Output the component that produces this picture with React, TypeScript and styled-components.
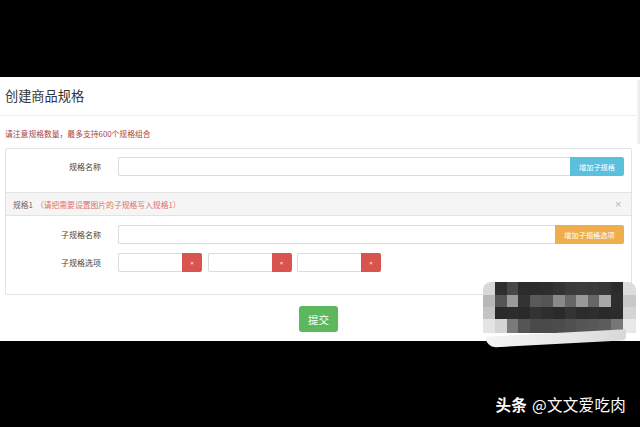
import React from 'react';
import styled, { createGlobalStyle } from 'styled-components';

const GlobalStyle = createGlobalStyle`
	html, body {
		margin: 0;
		padding: 0;
		background: #000;
	}
	body {
		font-family: "Noto Sans CJK SC", "Noto Sans", "Liberation Sans", sans-serif;
		color: #333;
	}
`;

const Screen = styled.div`
	position: relative;
	width: 640px;
	height: 427px;
	display: flex;
	flex-direction: column;
	overflow: hidden;
	background: #000;
`;

const TopBand = styled.div`
	height: 77px;
	flex: none;
`;

const Page = styled.div`
	height: 264px;
	flex: none;
	background: #fff;
	display: flex;
	flex-direction: column;
`;

const Header = styled.div`
	height: 38px;
	display: flex;
	align-items: center;
	padding-left: 5px;
	border-bottom: 1px solid #eeeeee;
`;

const Title = styled.h1`
	margin: 0;
	font-size: 13.2px;
	font-weight: 400;
	color: #333;
	line-height: 1;
`;

const Notice = styled.p`
	margin: 0;
	padding: 13px 5px 0;
	font-size: 7.8px;
	line-height: 10px;
	color: #a94442;
`;

const Panel = styled.section`
	margin: 9px 8px 0 5px;
	border: 1px solid #e3e3e3;
	border-radius: 2px;
`;

const Row = styled.div`
	display: grid;
	grid-template-columns: 95px 1fr;
	column-gap: 17px;
	align-items: center;
`;

const Label = styled.label`
	text-align: right;
	font-size: 8px;
	color: #444;
`;

const Group = styled.div`
	display: flex;
	height: 19px;
`;

const Input = styled.input<{ $w?: number }>`
	box-sizing: border-box;
	height: 19px;
	border: 1px solid #dcdcdc;
	border-right: none;
	border-radius: 2px 0 0 2px;
	padding: 0 4px;
	outline: none;
	${(p) => (p.$w ? `width: ${p.$w}px; flex: none;` : 'flex: 1; min-width: 0;')}
`;

const AddButton = styled.button<{ $bg: string; $w: number }>`
	flex: none;
	width: ${(p) => p.$w}px;
	height: 19px;
	border: none;
	border-radius: 0 2px 2px 0;
	background: ${(p) => p.$bg};
	color: #fff;
	font-family: inherit;
	font-size: 7.2px;
	padding: 0;
`;

const DelButton = styled.button`
	flex: none;
	width: 20px;
	height: 19px;
	border: none;
	border-radius: 0 2px 2px 0;
	background: #d9534f;
	color: #fff;
	font-size: 6px;
	line-height: 1;
	padding: 0;
`;

const TopSection = styled.div`
	padding: 8px 7px 16px 0;
`;

const SpecHead = styled.div`
	height: 22px;
	display: flex;
	align-items: center;
	justify-content: space-between;
	padding: 0 9px 0 7px;
	background: #f5f5f5;
	border-top: 1px solid #e3e3e3;
	border-bottom: 1px solid #e3e3e3;
	font-size: 7.8px;
	color: #666;
`;

const Hint = styled.span`
	color: #e0706c;
	margin-left: 3px;
`;

const Close = styled.span`
	color: #b5b5b5;
	font-size: 9px;
	font-family: "DejaVu Sans", sans-serif;
`;

const SpecBody = styled.div`
	display: flex;
	flex-direction: column;
	gap: 9px;
	padding: 9px 7px 22px 0;
`;

const Options = styled.div`
	display: flex;
	gap: 5.5px;
`;

const Actions = styled.div`
	margin: 11px 8px 0 5px;
	display: flex;
	justify-content: center;
`;

const Submit = styled.button`
	width: 39px;
	height: 26px;
	border: none;
	border-radius: 3px;
	background: #5cb85c;
	color: #fff;
	font-family: inherit;
	font-size: 10.5px;
	padding: 0;
`;

const BottomBand = styled.div`
	flex: 1;
	display: flex;
	justify-content: flex-end;
	align-items: flex-start;
	padding: 54px 14px 0 0;
`;

const Watermark = styled.div`
	color: #fff;
	font-size: 15.5px;
	line-height: 18px;
	letter-spacing: 0.3px;
	& b {
		font-weight: 700;
		margin-right: 5px;
	}
`;

const Mosaic = styled.div`
	position: absolute;
	left: 483px;
	top: 282px;
	width: 153px;
	height: 51px;
	display: grid;
	grid-template-columns: 12px repeat(11, 11.6px) 13px;
	grid-template-rows: 13px 12px 12px 14px;
	border-radius: 8px 8px 0 0;
	overflow: hidden;
`;

const Cell = styled.div<{ $c: string }>`
	background: ${(p) => p.$c};
`;

const Smear = styled.div`
	position: absolute;
	left: 486px;
	top: 333px;
	width: 140px;
	height: 11px;
	background: linear-gradient(90deg, #f4f4f4, #e6e6e6 60%, #d8d8d8);
	transform: skewY(-3deg);
	border-radius: 0 0 4px 10px;
`;

const SideShadow = styled.div`
	position: absolute;
	right: 0;
	top: 80px;
	width: 4px;
	height: 64px;
	background: linear-gradient(90deg, #fff, #e8e8e8);
`;

const mosaicRows: string[][] = [
	['#d8d8d8', '#2f2f2f', '#484848', '#2c2c2c', '#2c2c2c', '#2e2e2e', '#333', '#3a3a3a', '#3c3c3c', '#3a3a3a', '#363636', '#2c2c2c', '#dcdcdc'],
	['#b8b8b8', '#555', '#9a9a9a', '#333', '#5a5a5a', '#555', '#8a8a8a', '#666', '#999', '#666', '#a8a8a8', '#2e2e2e', '#c8c8c8'],
	['#c4c4c4', '#2a2a2a', '#2c2c2c', '#2a2a2a', '#333', '#2e2e2e', '#2a2a2a', '#333', '#2c2c2c', '#2e2e2e', '#2a2a2a', '#2c2c2c', '#d4d4d4'],
	['#e4e4e4', '#d4d4d4', '#7a7a7a', '#555', '#4a4a4a', '#4a4a4a', '#4c4c4c', '#505050', '#555', '#585858', '#5c5c5c', '#777', '#e8e8e8'],
];

const App: React.FC = () => {
	return (
		<>
			<GlobalStyle />
			<Screen>
				<TopBand />
				<Page>
					<Header>
						<Title>创建商品规格</Title>
					</Header>
					<Notice>请注意规格数量，最多支持600个规格组合</Notice>
					<Panel>
						<TopSection>
							<Row>
								<Label>规格名称</Label>
								<Group>
									<Input />
									<AddButton $bg="#5bc0de" $w={54}>增加子规格</AddButton>
								</Group>
							</Row>
						</TopSection>
						<SpecHead>
							<span>
								规格1<Hint>（请把需要设置图片的子规格写入规格1）</Hint>
							</span>
							<Close>×</Close>
						</SpecHead>
						<SpecBody>
							<Row>
								<Label>子规格名称</Label>
								<Group>
									<Input />
									<AddButton $bg="#f0ad4e" $w={69}>增加子规格选项</AddButton>
								</Group>
							</Row>
							<Row>
								<Label>子规格选项</Label>
								<Options>
									{[0, 1, 2].map((i) => (
										<Group key={i}>
											<Input $w={64} />
											<DelButton>×</DelButton>
										</Group>
									))}
								</Options>
							</Row>
						</SpecBody>
					</Panel>
					<Actions>
						<Submit>提交</Submit>
					</Actions>
				</Page>
				<BottomBand>
					<Watermark>
						<b>头条</b>@文文爱吃肉
					</Watermark>
				</BottomBand>
				<SideShadow />
				<Mosaic>
					{mosaicRows.flatMap((row, r) =>
						row.map((c, i) => <Cell key={`${r}-${i}`} $c={c} />)
					)}
				</Mosaic>
				<Smear />
			</Screen>
		</>
	);
};

export default App;
